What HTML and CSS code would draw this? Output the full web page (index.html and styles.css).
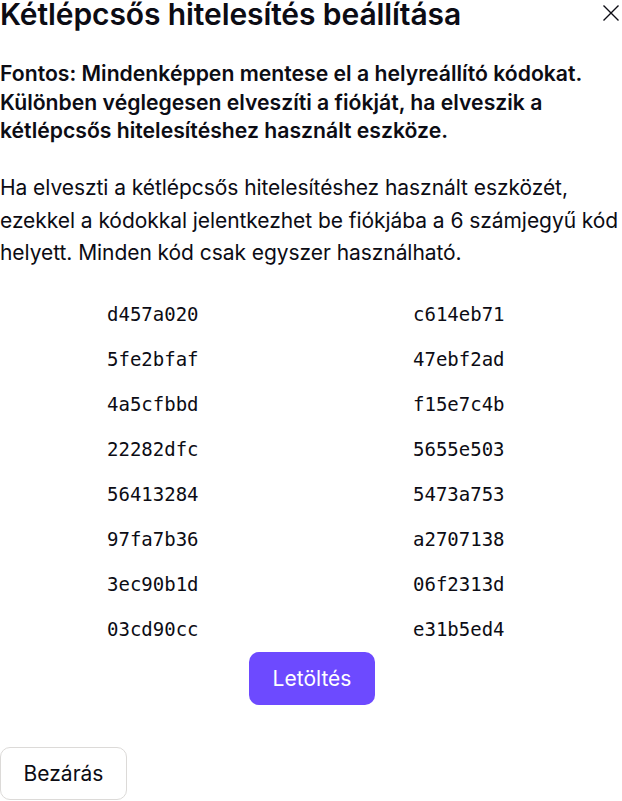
FILE: index.html
```html
<!DOCTYPE html>
<html lang="hu">
<head>
<meta charset="utf-8">
<title>Kétlépcsős hitelesítés beállítása</title>
<link rel="stylesheet" href="styles.css">
</head>
<body>
<div class="modal">
  <header class="modal-header">
    <h1 class="modal-title">Kétlépcsős hitelesítés beállítása</h1>
    <button class="close-btn" aria-label="Bezárás">
      <svg viewBox="0 0 18 18" width="18" height="18"><path d="M1.5 1.5 L16.5 16.5 M16.5 1.5 L1.5 16.5" stroke="#0c0c14" stroke-width="1.4" fill="none"/></svg>
    </button>
  </header>
  <p class="warning">Fontos: Mindenképpen mentese el a helyreállító kódokat. Különben véglegesen elveszíti a fiókját, ha elveszik a kétlépcsős hitelesítéshez használt eszköze.</p>
  <p class="info">Ha elveszti a kétlépcsős hitelesítéshez használt eszközét, ezekkel a kódokkal jelentkezhet be fiókjába a 6 számjegyű kód helyett. Minden kód csak egyszer használható.</p>
  <ul class="codes">
    <li>d457a020</li><li>c614eb71</li>
    <li>5fe2bfaf</li><li>47ebf2ad</li>
    <li>4a5cfbbd</li><li>f15e7c4b</li>
    <li>22282dfc</li><li>5655e503</li>
    <li>56413284</li><li>5473a753</li>
    <li>97fa7b36</li><li>a2707138</li>
    <li>3ec90b1d</li><li>06f2313d</li>
    <li>03cd90cc</li><li>e31b5ed4</li>
  </ul>
  <div class="download-row">
    <button class="btn btn-primary">Letöltés</button>
  </div>
  <footer class="modal-footer">
    <button class="btn btn-outline">Bezárás</button>
  </footer>
</div>
</body>
</html>
```

FILE: styles.css
```css
* { box-sizing: border-box; }
html, body { margin: 0; padding: 0; background: #ffffff; }
body {
  font-family: Inter, "Noto Sans", "Liberation Sans", sans-serif;
  color: #0c0c14;
  width: 622px;
  height: 801px;
  overflow: hidden;
}
.modal { display: flex; flex-direction: column; }
.modal-header {
  display: flex;
  justify-content: space-between;
  align-items: flex-start;
}
.modal-title {
  margin: 0;
  font-size: 30px;
  font-weight: 600;
  line-height: 29px;
  letter-spacing: -0.1px;
}
.close-btn {
  border: 0;
  background: transparent;
  padding: 0;
  margin: 4px 2px 0 0;
  width: 18px;
  height: 18px;
  display: flex;
}
.warning {
  margin: 30px 0 0 0;
  font-size: 21.2px;
  font-weight: 600;
  line-height: 28.5px;
}
.info {
  margin: 27.5px 0 0 0;
  font-size: 21px;
  font-weight: 400;
  line-height: 32.5px;
  letter-spacing: -0.06px;
}
.codes {
  list-style: none;
  margin: 22px 0 0 0;
  padding: 0 0 0 107px;
  display: grid;
  grid-template-columns: 306px auto;
  font-family: "DejaVu Sans Mono", "Liberation Mono", monospace;
  font-size: 19px;
  line-height: 45.1px;
  color: #0c0c14;
}
.download-row {
  display: flex;
  justify-content: center;
}
.btn {
  font-family: Inter, "Noto Sans", "Liberation Sans", sans-serif;
  font-size: 21px;
  border-radius: 10px;
  height: 53px;
  cursor: pointer;
}
.btn-primary {
  background: #6d4aff;
  color: #ffffff;
  border: 0;
  width: 126px;
  margin-left: 2px;
}
.modal-footer {
  margin-top: 42px;
  display: flex;
}
.btn-outline {
  background: #ffffff;
  color: #0c0c14;
  border: 1px solid #dcdad8;
  width: 127px;
  height: 53px;
}
```
